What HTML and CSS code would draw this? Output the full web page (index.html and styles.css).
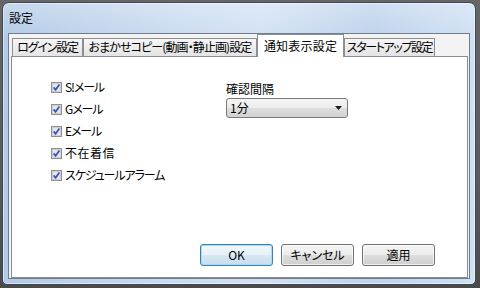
FILE: index.html
```html
<!DOCTYPE html>
<html lang="ja">
<head>
<meta charset="utf-8">
<title>設定</title>
<link rel="stylesheet" href="styles.css">
</head>
<body>
<div class="window">
  <div class="titlebar">設定</div>
  <div class="client">
    <div class="tabs">
      <div class="tab t1">ログイン設定</div>
      <div class="tab t2">おまかせコピー(動画・静止画)設定</div>
      <div class="tab t3 selected">通知表示設定</div>
      <div class="tab t4">スタートアップ設定</div>
    </div>
    <div class="panel">
      <div class="settings">
        <div class="checks">
          <div class="check"><svg class="box" width="11" height="11" viewBox="0 0 11 11"><rect x="0.5" y="0.5" width="10" height="10" fill="#f4f4f4" stroke="#8e8f8f"/><rect x="1.5" y="1.5" width="8" height="8" fill="#e6e6e6" stroke="#d0d0d0"/><path d="M2.6 5.4 L4.6 7.8 L8.4 2.6" fill="none" stroke="#2f55c0" stroke-width="1.7"/></svg><span class="kana">S!メール</span></div>
          <div class="check"><svg class="box" width="11" height="11" viewBox="0 0 11 11"><rect x="0.5" y="0.5" width="10" height="10" fill="#f4f4f4" stroke="#8e8f8f"/><rect x="1.5" y="1.5" width="8" height="8" fill="#e6e6e6" stroke="#d0d0d0"/><path d="M2.6 5.4 L4.6 7.8 L8.4 2.6" fill="none" stroke="#2f55c0" stroke-width="1.7"/></svg><span class="kana">Gメール</span></div>
          <div class="check"><svg class="box" width="11" height="11" viewBox="0 0 11 11"><rect x="0.5" y="0.5" width="10" height="10" fill="#f4f4f4" stroke="#8e8f8f"/><rect x="1.5" y="1.5" width="8" height="8" fill="#e6e6e6" stroke="#d0d0d0"/><path d="M2.6 5.4 L4.6 7.8 L8.4 2.6" fill="none" stroke="#2f55c0" stroke-width="1.7"/></svg><span class="kana">Eメール</span></div>
          <div class="check"><svg class="box" width="11" height="11" viewBox="0 0 11 11"><rect x="0.5" y="0.5" width="10" height="10" fill="#f4f4f4" stroke="#8e8f8f"/><rect x="1.5" y="1.5" width="8" height="8" fill="#e6e6e6" stroke="#d0d0d0"/><path d="M2.6 5.4 L4.6 7.8 L8.4 2.6" fill="none" stroke="#2f55c0" stroke-width="1.7"/></svg><span class="kanji">不在着信</span></div>
          <div class="check"><svg class="box" width="11" height="11" viewBox="0 0 11 11"><rect x="0.5" y="0.5" width="10" height="10" fill="#f4f4f4" stroke="#8e8f8f"/><rect x="1.5" y="1.5" width="8" height="8" fill="#e6e6e6" stroke="#d0d0d0"/><path d="M2.6 5.4 L4.6 7.8 L8.4 2.6" fill="none" stroke="#2f55c0" stroke-width="1.7"/></svg><span class="kana">スケジュールアラーム</span></div>
        </div>
        <div class="interval">
          <div class="interval-label">確認間隔</div>
          <div class="combo"><span>1分</span><svg class="arrow" width="7" height="4" viewBox="0 0 7 4"><path d="M0 0 H7 L3.5 4 Z" fill="#1a1a1a"/></svg></div>
        </div>
      </div>
      <div class="buttons">
        <div class="btn default">OK</div>
        <div class="btn">キャンセル</div>
        <div class="btn">適用</div>
      </div>
    </div>
  </div>
</div>
</body>
</html>
```

FILE: styles.css
```css
html, body {
  margin: 0;
  padding: 0;
}
body {
  width: 480px;
  height: 288px;
  overflow: hidden;
  background: linear-gradient(to bottom, #666 0%, #5a5a5a 60%, #4a4a4a 100%);
  font-family: "Noto Sans CJK JP", "Noto Sans", sans-serif;
  font-size: 12px;
  font-feature-settings: "palt";
  color: #000;
}
.window {
  box-sizing: border-box;
  margin: 2px 0 0 2px;
  width: 474px;
  height: 283px;
  border: 1px solid #3e4a58;
  border-radius: 7px 7px 5px 5px;
  box-shadow: inset 0 0 0 1px rgba(255,255,255,0.45);
  background:
    linear-gradient(to bottom, rgba(255,255,255,0.28), rgba(255,255,255,0) 34px),
    linear-gradient(to right, #b3cae6 0%, #c9dbf0 35%, #d2e2f3 55%, #bed3ec 78%, #cfe0f3 100%);
  padding: 0 5px 5px 5px;
  display: flex;
  flex-direction: column;
}
.titlebar {
  height: 30px;
  line-height: 30px;
  padding-left: 1px;
  font-size: 12px;
}
.client {
  flex: 1;
  border: 1px solid #6f7d8e;
  background: #f3f3f3;
  padding: 0 1px 0 2px;
  display: flex;
  flex-direction: column;
}
.tabs {
  height: 22px;
  display: flex;
  align-items: flex-end;
  padding-left: 1px;
}
.tab {
  box-sizing: border-box;
  height: 18px;
  line-height: 16px;
  text-align: center;
  white-space: nowrap;
  overflow: hidden;
  border: 1px solid #8c8e94;
  border-bottom: none;
  background: linear-gradient(to bottom, #f6f6f6, #e4e4e4);
  font-size: 12px;
}
.t1 { width: 71px; letter-spacing: -1.2px; }
.t2 { width: 174px; letter-spacing: -0.9px; }
.t3 { width: 87px; letter-spacing: 0.2px; }
.t4 { width: 91px; letter-spacing: -1.4px; }
.tab.selected {
  height: 23px;
  line-height: 21px;
  margin-bottom: -1px;
  background: #fff;
  position: relative;
  z-index: 1;
}
.panel {
  flex: 1;
  border: 1px solid #898c95;
  background: #fff;
  display: flex;
  flex-direction: column;
}
.settings {
  display: flex;
  padding-top: 19px;
}
.checks {
  margin-left: 39px;
  width: 175px;
  display: flex;
  flex-direction: column;
}
.check {
  height: 22px;
  display: flex;
  align-items: center;
  gap: 3px;
  line-height: 14px;
}
.kana {
  letter-spacing: -1.1px;
}
.kanji {
  letter-spacing: 0.5px;
}
.box {
  flex: none;
  display: block;
}
.interval {
  padding-top: 5px;
}
.interval-label {
  line-height: 15px;
  height: 15px;
}
.combo {
  box-sizing: border-box;
  margin-top: 2px;
  width: 122px;
  height: 20px;
  border: 1px solid #7a7a7a;
  border-radius: 3px;
  background: linear-gradient(to bottom, #f4f4f4 0%, #ececec 50%, #dedede 51%, #d2d2d2 100%);
  display: flex;
  align-items: center;
  justify-content: space-between;
  padding: 0 5px 0 3px;
  line-height: 16px;
}
.arrow {
  display: block;
}
.buttons {
  margin-top: auto;
  display: flex;
  justify-content: flex-end;
  gap: 8px;
  padding: 0 32px 11px 0;
}
.btn {
  box-sizing: border-box;
  width: 73px;
  height: 22px;
  border: 1px solid #707070;
  border-radius: 3px;
  background: linear-gradient(to bottom, #f4f4f4 0%, #ececec 48%, #dddddd 52%, #cfcfcf 100%);
  box-shadow: inset 0 0 0 1px rgba(255,255,255,0.7);
  text-align: center;
  line-height: 20px;
  font-size: 12px;
}
.btn.default {
  border-color: #3c7fb1;
  box-shadow: inset 0 0 0 1px #a8dcf5;
  background: linear-gradient(to bottom, #f2f8fc 0%, #e6f1f9 48%, #d6e7f3 52%, #c8dcec 100%);
}
```
